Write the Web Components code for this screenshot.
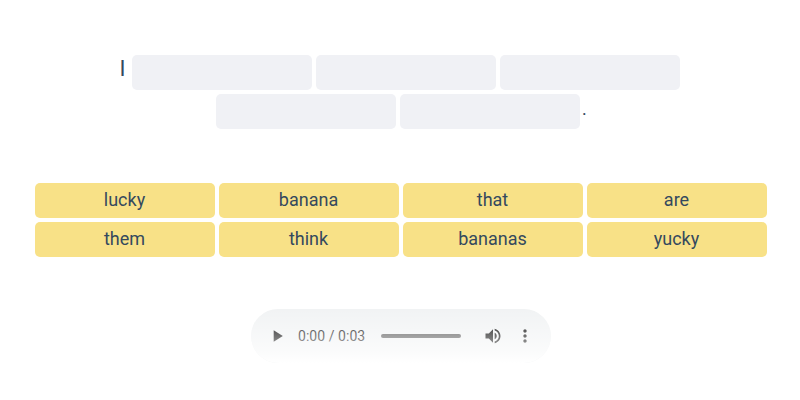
<!DOCTYPE html>
<html lang="en">
<head>
  <meta charset="utf-8">
  <title>Word order</title>
  <style>
    body {
      margin: 0;
      background-color: #fff;
      color: #34495e;
      font-family: Roboto, "Open Sans", sans-serif;
    }
  </style>
</head>
<body>
  <word-exercise>
    <sentence-line slot="sentence">
      <span slot="start">I</span>
      <word-slot></word-slot>
      <word-slot></word-slot>
      <word-slot></word-slot>
    </sentence-line>
    <sentence-line slot="sentence">
      <word-slot></word-slot>
      <word-slot></word-slot>
      <span slot="end">.</span>
    </sentence-line>
    <word-tile slot="words">lucky</word-tile>
    <word-tile slot="words">banana</word-tile>
    <word-tile slot="words">that</word-tile>
    <word-tile slot="words">are</word-tile>
    <word-tile slot="words">them</word-tile>
    <word-tile slot="words">think</word-tile>
    <word-tile slot="words">bananas</word-tile>
    <word-tile slot="words">yucky</word-tile>
    <audio-bar slot="player" current="0:00" duration="0:03"></audio-bar>
  </word-exercise>

  <script>
    class WordExercise extends HTMLElement {
      constructor () {
        super()
        this.attachShadow({ mode: 'open' })
      }

      connectedCallback () {
        this.shadowRoot.innerHTML = `
          <style>
            :host {
              display: block;
              height: 400px;
              box-sizing: border-box;
              padding-top: 55px;
              overflow: hidden;
            }

            .sentence {
              display: flex;
              flex-direction: column;
              gap: 4px;
            }

            .words {
              display: grid;
              grid-template-columns: repeat(4, 180px);
              gap: 4px;
              margin: 54px 0 0 35px;
            }

            .player {
              display: flex;
              margin: 52px 0 0 251px;
            }
          </style>

          <div class="sentence"><slot name="sentence"></slot></div>
          <div class="words"><slot name="words"></slot></div>
          <div class="player"><slot name="player"></slot></div>
        `
      }
    }

    class SentenceLine extends HTMLElement {
      constructor () {
        super()
        this.attachShadow({ mode: 'open' })
      }

      connectedCallback () {
        this.shadowRoot.innerHTML = `
          <style>
            :host {
              display: flex;
              justify-content: center;
              gap: 4px;
              height: 35px;
              font-size: 22px;
              line-height: 28px;
            }

            ::slotted([slot="start"]) {
              width: 12.600px;
              margin-left: -0.600px;
              margin-right: -4px;
            }

            ::slotted([slot="end"]) {
              width: 4px;
              margin-left: -2px;
              margin-right: -2px;
              font-size: 18px;
              line-height: 29px;
            }
          </style>

          <slot name="start"></slot>
          <slot></slot>
          <slot name="end"></slot>
        `
      }
    }

    class WordSlot extends HTMLElement {
      constructor () {
        super()
        this.attachShadow({ mode: 'open' })
      }

      connectedCallback () {
        this.shadowRoot.innerHTML = `
          <style>
            :host {
              display: block;
              width: 180px;
              height: 35px;
              border-radius: 5px;
              background-color: #f0f1f5;
            }
          </style>
        `
      }
    }

    class WordTile extends HTMLElement {
      constructor () {
        super()
        this.attachShadow({ mode: 'open' })
      }

      connectedCallback () {
        this.shadowRoot.innerHTML = `
          <style>
            :host {
              display: block;
              box-sizing: border-box;
              height: 35px;
              padding-right: 1px;
              border-radius: 5px;
              background-color: #f8e187;
              font-size: 18px;
              line-height: 33px;
              text-align: center;
              cursor: pointer;
            }
          </style>

          <slot></slot>
        `
      }
    }

    class AudioBar extends HTMLElement {
      constructor () {
        super()
        this.attachShadow({ mode: 'open' })
      }

      connectedCallback () {
        this.shadowRoot.innerHTML = `
          <style>
            :host {
              display: flex;
              align-items: center;
              position: relative;
              box-sizing: border-box;
              width: 300px;
              height: 54px;
              padding: 0 16px;
              border-radius: 27px;
              background-color: #f1f3f4;
              color: #111;
              font-size: 14px;
              overflow: hidden;
            }

            /* fades the whole bar out towards the bottom */
            :host::after {
              content: "";
              position: absolute;
              inset: 0;
              background: linear-gradient(rgba(255, 255, 255, 0), rgba(255, 255, 255, 0.700) 80%, #fff);
            }

            svg {
              flex: none;
              width: 20px;
              height: 20px;
              fill: #000;
            }

            .time {
              width: 73px;
              margin-left: 11px;
              letter-spacing: 0.050px;
              white-space: nowrap;
            }

            .track {
              width: 79.500px;
              height: 4px;
              margin: 0 22.500px 0 10px;
              border-radius: 2px;
              background-color: #555;
            }

            .more {
              margin-left: 12px;
            }
          </style>

          <svg viewBox="0 0 24 24"><path d="M8 5v14l11-7z"/></svg>
          <span class="time">${this.getAttribute('current')} / ${this.getAttribute('duration')}</span>
          <div class="track"></div>
          <svg viewBox="0 0 24 24"><path d="M3 9v6h4l5 5V4L7 9H3zm13.500 3c0-1.770-1.020-3.290-2.500-4.030v8.050c1.480-.730 2.500-2.250 2.500-4.020zM14 3.230v2.060c2.890.860 5 3.540 5 6.710s-2.110 5.850-5 6.710v2.060c4.010-.910 7-4.490 7-8.770s-2.990-7.860-7-8.770z"/></svg>
          <svg class="more" viewBox="0 0 24 24"><path d="M12 8c1.100 0 2-.900 2-2s-.900-2-2-2-2 .900-2 2 .900 2 2 2zm0 2c-1.100 0-2 .900-2 2s.900 2 2 2 2-.900 2-2-.900-2-2-2zm0 6c-1.100 0-2 .900-2 2s.900 2 2 2 2-.900 2-2-.900-2-2-2z"/></svg>
        `
      }
    }

    customElements.define('word-exercise', WordExercise)
    customElements.define('sentence-line', SentenceLine)
    customElements.define('word-slot', WordSlot)
    customElements.define('word-tile', WordTile)
    customElements.define('audio-bar', AudioBar)
  </script>
</body>
</html>
